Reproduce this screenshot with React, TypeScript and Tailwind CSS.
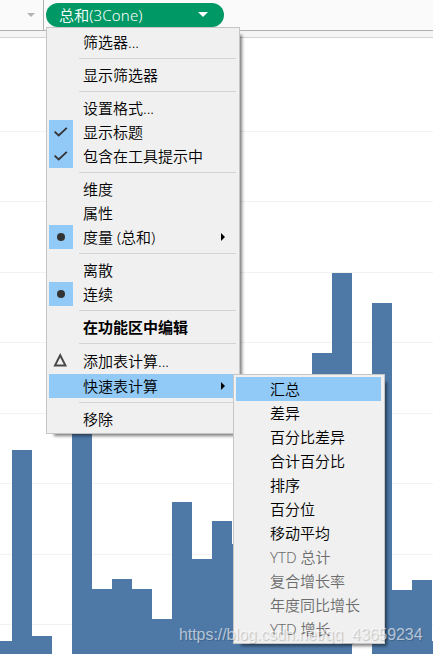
import type { ReactNode } from "react";

type Item = {
  label: string;
  mark?: "check" | "dot" | "delta";
  bold?: boolean;
  submenu?: boolean;
  active?: boolean;
  disabled?: boolean;
};

const groups: Item[][] = [
  [{ label: "筛选器..." }],
  [{ label: "显示筛选器" }],
  [
    { label: "设置格式..." },
    { label: "显示标题", mark: "check" },
    { label: "包含在工具提示中", mark: "check" },
  ],
  [
    { label: "维度" },
    { label: "属性" },
    { label: "度量 (总和)", mark: "dot", submenu: true },
  ],
  [{ label: "离散" }, { label: "连续", mark: "dot" }],
  [{ label: "在功能区中编辑", bold: true }],
  [
    { label: "添加表计算...", mark: "delta" },
    { label: "快速表计算", submenu: true, active: true },
  ],
  [{ label: "移除" }],
];

const calculations: Item[] = [
  { label: "汇总", active: true },
  { label: "差异" },
  { label: "百分比差异" },
  { label: "合计百分比" },
  { label: "排序" },
  { label: "百分位" },
  { label: "移动平均" },
  { label: "YTD 总计", disabled: true },
  { label: "复合增长率", disabled: true },
  { label: "年度同比增长", disabled: true },
  { label: "YTD 增长", disabled: true },
];

// bar heights in pixels, left to right
const bars = [
  13, 204, 18, 0, 260, 65, 75, 65, 35, 152, 95, 133, 110, 110, 110, 110, 301,
  381, 0, 351, 64, 74, 13,
];

const gridlines = [93, 163, 234, 304, 375, 445, 516, 586];

function Mark({ type }: { type: Item["mark"] }) {
  switch (type) {
    case "check":
      return (
        <svg width="24" height="24" viewBox="0 0 24 24">
          <path d="M5.6 11.7 L9.7 15.5 L17.8 7.8" fill="none" stroke="#333" strokeWidth="1.8" />
        </svg>
      );
    case "dot":
      return <div className="h-2 w-2 rounded-full bg-[#333]" />;
    case "delta":
      return (
        <svg width="24" height="24" viewBox="0 0 24 24">
          <path d="M11.2 6.2 L16.4 16.4 H6 Z" fill="none" stroke="#484848" strokeWidth="2" />
        </svg>
      );
    default:
      return null;
  }
}

function MenuRow({ item }: { item: Item }) {
  const boxed = item.mark === "check" || item.mark === "dot";
  return (
    <div
      className={`flex items-center ${item.mark === "delta" ? "h-[26px]" : "h-6"} ${
        item.active ? "bg-[#91c9f7]" : ""
      }`}
    >
      <div
        className={`flex h-6 w-6 shrink-0 items-center justify-center ${
          boxed ? "bg-[#91c9f7]" : ""
        }`}
      >
        <Mark type={item.mark} />
      </div>
      <span
        className={`ml-2.5 grow whitespace-pre ${item.bold ? "font-bold" : "font-[350]"} ${
          item.disabled ? "text-[#6d6d6d]" : "text-black"
        }`}
      >
        {item.label}
      </span>
      {item.submenu && (
        <svg className="mr-3 shrink-0" width="4" height="8" viewBox="0 0 4 8">
          <path d="M0 0 L4 4 L0 8 Z" fill="#000" />
        </svg>
      )}
    </div>
  );
}

function Menu({ className, children }: { className: string; children: ReactNode }) {
  return (
    <div
      className={`absolute border border-[#c6c6c6] bg-[#f0f0f0] p-0.5 text-[15px] leading-6 shadow-[5px_5px_3px_-3px_rgba(0,0,0,0.5)] ${className}`}
    >
      {children}
    </div>
  );
}

export default function App() {
  return (
    <div className="relative flex h-[654px] w-[433px] flex-col overflow-hidden bg-white font-['Noto_Sans','Noto_Sans_CJK_SC',sans-serif]">
      <div className="flex h-[31px] shrink-0 border-b border-[#b1b1b1] bg-[#fafafa]">
        <div className="flex w-11 items-center justify-end border-r border-[#b1b1b1] pr-2">
          <svg width="8" height="4" viewBox="0 0 8 4">
            <path d="M0 0 H8 L4 4 Z" fill="#b3b3b3" />
          </svg>
        </div>
        <div className="mt-[3px] ml-0.5 flex h-6 w-[178px] items-center justify-between rounded-full bg-[#009966] pr-4 pb-px pl-[13px] text-[15px] leading-6 font-[350] text-white">
          <span className="tracking-[0.15px]">总和(3Cone)</span>
          <svg width="10" height="5" viewBox="0 0 10 5">
            <path d="M0 0 H10 L5 5 Z" fill="#fff" />
          </svg>
        </div>
      </div>
      <div className="h-[7px] shrink-0 border-b border-[#d3d3d3] bg-[#f5f5f5]" />

      <div className="relative grow">
        {gridlines.map((y) => (
          <div key={y} className="absolute inset-x-0 h-px bg-[#f2f2f2]" style={{ top: y }} />
        ))}
        <div className="relative -ml-2 flex h-full items-end">
          {bars.map((height, i) => (
            <div key={i} className="w-5 shrink-0 bg-[#4e79a7]" style={{ height }} />
          ))}
        </div>
      </div>

      <Menu className="top-[27px] left-[46px] w-[194px]">
        {groups.map((group, i) => (
          <div key={i}>
            {i > 0 && <div className="my-1 mr-px ml-[30px] h-px bg-[#d4d4d4]" />}
            {group.map((item) => (
              <MenuRow key={item.label} item={item} />
            ))}
          </div>
        ))}
      </Menu>

      <Menu className="top-[374px] left-[233px] w-[152px] pr-[3px]">
        {calculations.map((item) => (
          <MenuRow key={item.label} item={item} />
        ))}
      </Menu>

      <div className="absolute top-[623px] left-[179px] font-['Liberation_Sans',sans-serif] text-base leading-6 tracking-[-0.06px] whitespace-nowrap text-white/60 [text-shadow:1px_1px_1px_rgba(0,0,0,0.2)]">
        https://blog.csdn.net/qq_43659234
      </div>
    </div>
  );
}
